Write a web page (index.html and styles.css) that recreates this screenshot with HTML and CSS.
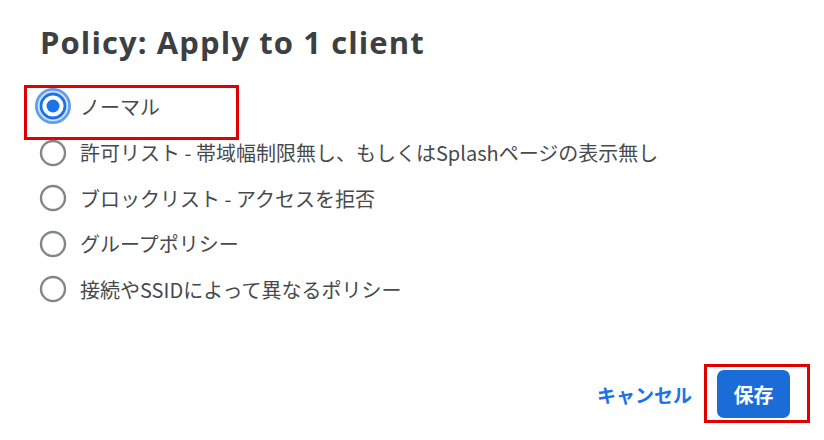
FILE: index.html
```html
<!DOCTYPE html>
<html lang="ja">
<head>
<meta charset="utf-8">
<link rel="stylesheet" href="styles.css">
</head>
<body>
<div class="dialog">
  <h1 class="title">Policy: Apply to 1 client</h1>
  <div class="options">
    <label class="option selected">
      <svg class="radio" width="40" height="40" viewBox="0 0 40 40"><circle cx="20" cy="20" r="14.3" fill="none" stroke="#d2e3fc" stroke-width="2"/><circle cx="20" cy="20" r="16.6" fill="none" stroke="#5e9ef0" stroke-width="2.8"/><circle cx="20" cy="20" r="12" fill="none" stroke="#1a73e8" stroke-width="2.8"/><circle cx="20" cy="20" r="6.5" fill="#1a73e8"/></svg>
      <span class="label">ノーマル</span>
      <span class="highlight hl-option"></span>
    </label>
    <label class="option">
      <svg class="radio" width="40" height="40" viewBox="0 0 40 40"><circle cx="20" cy="20" r="12" fill="none" stroke="#80868b" stroke-width="2.4"/></svg>
      <span class="label">許可リスト - 帯域幅制限無し、もしくはSplashページの表示無し</span>
    </label>
    <label class="option">
      <svg class="radio" width="40" height="40" viewBox="0 0 40 40"><circle cx="20" cy="20" r="12" fill="none" stroke="#80868b" stroke-width="2.4"/></svg>
      <span class="label">ブロックリスト - アクセスを拒否</span>
    </label>
    <label class="option">
      <svg class="radio" width="40" height="40" viewBox="0 0 40 40"><circle cx="20" cy="20" r="12" fill="none" stroke="#80868b" stroke-width="2.4"/></svg>
      <span class="label">グループポリシー</span>
    </label>
    <label class="option">
      <svg class="radio" width="40" height="40" viewBox="0 0 40 40"><circle cx="20" cy="20" r="12" fill="none" stroke="#80868b" stroke-width="2.4"/></svg>
      <span class="label">接続やSSIDによって異なるポリシー</span>
    </label>
  </div>
  <div class="actions">
    <button class="btn-text">キャンセル</button>
    <div class="save-wrap">
      <button class="btn-primary">保存</button>
      <span class="highlight hl-save"></span>
    </div>
  </div>
</div>
</body>
</html>
```
FILE: styles.css
```css
* { box-sizing: border-box; }
html, body {
  margin: 0;
  padding: 0;
  background: #ffffff;
}
body {
  width: 824px;
  height: 440px;
  overflow: hidden;
  font-family: Roboto, "Noto Sans CJK JP", sans-serif;
}
.dialog {
  display: flex;
  flex-direction: column;
  padding: 22px 0 0 40px;
  height: 440px;
}
.title {
  margin: 0;
  font-family: "Open Sans", Roboto, sans-serif;
  font-size: 31px;
  font-weight: 700;
  line-height: 40px;
  color: #3c4043;
  letter-spacing: 1.1px;
}
.options {
  display: flex;
  flex-direction: column;
  margin-top: 20px;
  margin-left: -7px;
}
.option {
  position: relative;
  display: flex;
  align-items: center;
  height: 45.5px;
  gap: 7px;
}
.option.selected { height: 48px; }
.radio { flex: none; display: block; }
.label {
  font-family: "Noto Sans CJK JP", sans-serif;
  font-size: 20px;
  color: #474a4d;
  white-space: nowrap;
}
.highlight {
  position: absolute;
  border: 3px solid #e00000;
  pointer-events: none;
}
.hl-option {
  left: -9px;
  top: 3px;
  width: 215px;
  height: 55px;
}
.actions {
  display: flex;
  align-items: center;
  justify-content: flex-end;
  margin-top: auto;
  margin-bottom: 22px;
  padding-right: 34px;
  gap: 25px;
}
.btn-text {
  border: none;
  background: none;
  padding: 0;
  font-family: "Noto Sans CJK JP", sans-serif;
  font-weight: 700;
  font-size: 19px;
  color: #1a73e8;
}
.save-wrap {
  position: relative;
}
.btn-primary {
  display: block;
  width: 73px;
  height: 48px;
  border: none;
  border-radius: 7px;
  background: #1a6dd6;
  color: #ffffff;
  font-family: "Noto Sans CJK JP", sans-serif;
  font-weight: 700;
  font-size: 20px;
}
.hl-save {
  left: -13px;
  top: -6px;
  width: 106px;
  height: 59px;
}
```
